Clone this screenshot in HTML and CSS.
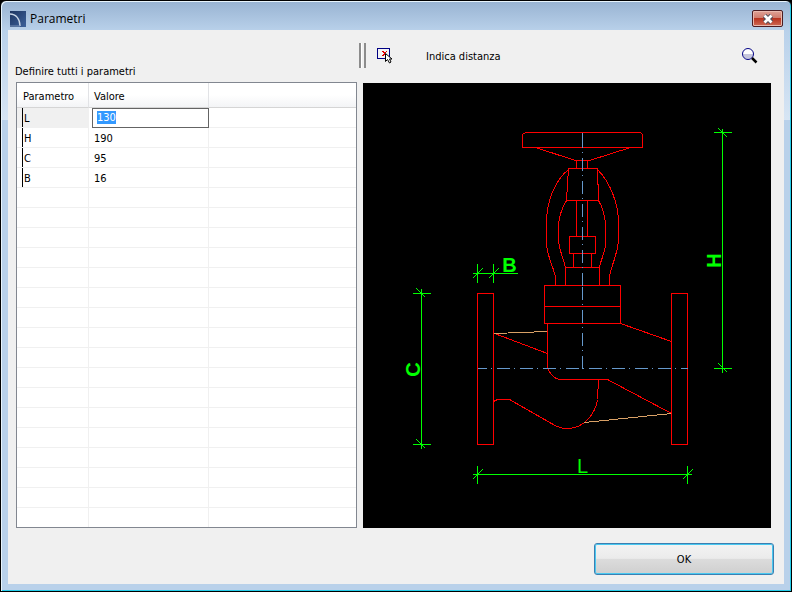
FILE: index.html
```
<!DOCTYPE html>
<html lang="it">
<head>
  <meta charset="UTF-8" />
  <title>Parametri</title>
  <link rel="stylesheet" href="styles.css">
</head>
<body>
  <div class="window">
    <!-- Title bar -->
    <header class="titlebar">
      <svg class="app-icon" width="16" height="16" viewBox="0 0 16 16">
        <defs>
          <linearGradient id="appFill" x1="0" y1="0" x2="1" y2="1">
            <stop offset="0" stop-color="#1d3560" />
            <stop offset="1" stop-color="#3d629b" />
          </linearGradient>
        </defs>
        <rect width="16" height="16" fill="url(#appFill)" />
        <path d="M0 3C6 3 10 8 10 15" fill="none" stroke="#c9d6e6" stroke-width="1.4" />
        <path d="M0 15H10" stroke="#7c95b8" />
      </svg>
      <h1>Parametri</h1>
      <button class="close" type="button" aria-label="Chiudi">
        <svg width="12" height="10" viewBox="0 0 12 10">
          <path d="M2.5 1.5L9.5 8.5M9.5 1.5L2.5 8.5" stroke="#4c4f5c" stroke-width="4.6" />
          <path d="M2.5 1.5L9.5 8.5M9.5 1.5L2.5 8.5" stroke="#fff" stroke-width="2.8" />
        </svg>
      </button>
    </header>

    <form class="content">
      <div class="panels">
        <!-- Parameter list -->
        <section class="left">
          <h2 id="listLabel">Definire tutti i parametri</h2>
          <div class="list">
            <table aria-labelledby="listLabel">
              <thead>
                <tr><th class="name">Parametro</th><th class="value">Valore</th><th></th></tr>
              </thead>
              <tbody>
                <tr class="selected">
                  <td><label for="valueL">L</label></td>
                  <td class="edit"><input id="valueL" type="text" value="130" /></td>
                  <td></td>
                </tr>
                <tr><td>H</td><td>190</td><td></td></tr>
                <tr><td>C</td><td>95</td><td></td></tr>
                <tr><td>B</td><td>16</td><td></td></tr>
              </tbody>
            </table>
            <div class="empty-rows"></div>
          </div>
        </section>

        <!-- Toolbar and preview -->
        <section class="right">
          <div class="toolbar">
            <span class="grip"></span>
            <button class="tool" type="button">
              <svg width="16" height="17" viewBox="0 0 16 17">
                <rect x="0.5" y="1.5" width="12" height="10" fill="#f4f4f4" stroke="#000084" />
                <path d="M5 4h2v1h2v-1h1v1h-1v1h-1v1h1v1h1v1h-2v-1h-1v1h-2v-1h1v-1h1v-1h-1v-1h-1z" fill="#e00000" />
                <path d="M8.500 6.500v8l2-2 2 3.500 1.500-1-1.500-3h2.500z" fill="#fff" stroke="#000" />
              </svg>
              <span>Indica distanza</span>
            </button>
            <button class="tool zoom" type="button" aria-label="Zoom">
              <svg width="16" height="16" viewBox="0 0 16 16">
                <circle cx="6" cy="6" r="5.500" fill="#fff" />
                <path d="M1 6h10a5 5 0 0 1-10 0z" fill="#c6c6dc" />
                <circle cx="6" cy="6" r="5.500" fill="none" stroke="#000084" />
                <path d="M10 10l4.500 4.500" stroke="#000" stroke-width="2.500" />
              </svg>
            </button>
          </div>

          <svg class="drawing" viewBox="362.5 82.5 408 445" role="img" aria-label="Valvola">
            <!-- valve body -->
            <g class="red">
              <path d="M525 132H640L642 134V147H522V134Z" />
              <path d="M535 147L575 160H589L630 147M576 160V168M587 160V168" />
              <path d="M568 168H597L598 200H566Z" />
              <path d="M576 200V236M587 200V236" />
              <path d="M569 236H595V253H569ZM573 253V267M591 253V267M565 267H599V285H565Z" />
              <path d="M568 169C554 180 546 202 546 222V245C548 260 555 271 555 278V285" />
              <path d="M597 169C610 182 618 204 618 222V241C616 258 609 269 609 277V285" />
              <path d="M566 200C561 208 558 218 558 228V240C559 250 563 259 565 267" />
              <path d="M598 200C603 208 605 218 605 228V243C605 251 600 260 599 267" />
              <path d="M544 285H620V323H544ZM544 306H620" />
              <path d="M477 293H493V444H477ZM671 293H687V444H671Z" />
              <path d="M494 333L547 353M620 323L671 341" />
              <path d="M547 323V367C549 373 554 379 560 379H607L671 413" />
              <path d="M598 379L597 399C595 412 585 428 566 428C562 428 556 426 551 423L509 399H497L493 401" />
            </g>
            <path class="tan" d="M494 333L547 331M584 422L671 413" />
            <!-- centre lines -->
            <path class="axis" d="M582 132V134M582 134V286M582 286V368" />
            <path class="axis" stroke-dashoffset="4" d="M477 368H687" />
            <!-- dimensions -->
            <g class="green">
              <path d="M421 288V448M412 293H430M412 444H430M416 288L425 297M416 439L425 448" />
              <path d="M472 273H517M477 263V282M493 263V282M472 278L482 268M488 278L498 268" />
              <path d="M472 474H691M477 465V483M687 465V483M472 479L482 469M682 479L692 469" />
              <path d="M722 128V372M713 132H731M713 368H731M718 128L727 137M718 363L727 372" />
            </g>
            <g class="dims">
              <text class="bold" x="509" y="271">B</text>
              <text x="582" y="472">L</text>
              <text class="bold" transform="translate(419 369) rotate(-90)">C</text>
              <text class="bold" transform="translate(720 260) rotate(-90)">H</text>
            </g>
          </svg>
        </section>
      </div>

      <footer>
        <button class="ok" type="button">OK</button>
      </footer>
    </form>
  </div>

  <script>
    const field = document.getElementById("valueL");
    field.focus();
    field.select();
  </script>
</body>
</html>
```
FILE: styles.css
```
*, *::before, *::after {
  box-sizing: border-box;
}
html, body {
  margin: 0;
  padding: 0;
}
body {
  background: #000;
  color: #000;
  font: 11px/14px Tahoma, "DejaVu Sans Condensed", "Open Sans", sans-serif;
}
button, input {
  font: inherit;
  color: inherit;
}
svg {
  display: block;
}

/* Window frame */
.window {
  display: flex;
  flex-direction: column;
  min-height: 100vh;
  padding: 0 7px 7px;
  border: 1px solid #000;
  border-radius: 6px 6px 0 0;
  background: linear-gradient(#98b3d2 0, #b9d1ea 30px, #d7e5f4 119px, #b9d1ea 119px);
  box-shadow: inset 1px 1px #e8f4fc, inset -1px -1px #25cdea;
}
.titlebar {
  display: flex;
  align-items: center;
  height: 29px;
  padding: 6px 1px 0 2px;
}
h1 {
  flex: 1;
  margin: 0 0 0 4px;
  font: 12px/16px "Segoe UI", "Open Sans", sans-serif;
}
.close {
  display: grid;
  place-items: center;
  width: 31px;
  height: 17px;
  padding: 0;
  border: 1px solid #4b1c22;
  border-radius: 2px;
  background: linear-gradient(#dfa296 0, #cf7a6c 48%, #b8331f 50%, #ce6a55 100%);
  box-shadow: inset 0 0 0 1px #e9b9ae;
}

.content {
  display: flex;
  flex: 1;
  flex-direction: column;
  background: #f0f0f0;
}
.panels {
  display: grid;
  flex: 1;
  grid-template-columns: 341fr 408fr;
  gap: 6px;
  padding: 0 13px 0 8px;
}
.left, .right {
  display: flex;
  flex-direction: column;
  min-width: 0;
}

/* Parameter list */
h2 {
  margin: 35px 0 3px -1px;
  font: inherit;
}
.list {
  display: flex;
  flex: 1;
  flex-direction: column;
  border: 1px solid #828790;
  background: #fff;
}
table {
  width: 100%;
  border-collapse: separate;
  border-spacing: 0;
  table-layout: fixed;
}
th {
  height: 25px;
  padding: 3px 0 0 5px;
  border-right: 1px solid #e2e3e6;
  border-bottom: 1px solid #d5d5d5;
  background: linear-gradient(#fff 50%, #f3f4f6 100%);
  font-weight: normal;
  text-align: left;
}
.name {
  width: 72px;
  padding-left: 6px;
}
.value {
  width: 120px;
}
td {
  height: 20px;
  padding: 2px 5px 0;
  border-right: 1px solid #f0f0f0;
  border-bottom: 1px solid #f0f0f0;
}
th:last-child, td:last-child {
  border-right: 0;
}
td:first-child {
  padding-left: 7px;
  background: linear-gradient(#000, #000) 5px 0 / 1px 100% no-repeat;
}
.selected td:first-child {
  background-color: #f0f0f0;
}
td.edit {
  padding: 0 0 0 3px;
  border: 0;
}
td.edit input {
  display: block;
  width: 100%;
  height: 20px;
  padding: 0 4px 2px;
  border: 1px solid #646464;
  outline: 0;
  background: #fff;
}
input::selection {
  background: #3399ff;
  color: #fff;
}
.empty-rows {
  flex: 1;
  background:
    linear-gradient(#f0f0f0, #f0f0f0) 71px 0 / 1px 100% no-repeat,
    linear-gradient(#f0f0f0, #f0f0f0) 191px 0 / 1px 100% no-repeat,
    repeating-linear-gradient(#fff 0 19px, #f0f0f0 19px 20px);
}

/* Toolbar */
.toolbar {
  display: flex;
  align-items: center;
  height: 51px;
  margin: 0 0 2px -4px;
  padding-right: 13px;
}
.grip {
  width: 7px;
  height: 25px;
  border: solid #8c8c8c;
  border-width: 0 2px;
  background: linear-gradient(90deg, #fff 1px, #f0f0f0 1px);
}
.tool {
  display: flex;
  align-items: center;
  gap: 33px;
  margin-left: 11px;
  padding: 0;
  border: 0;
  background: none;
}
.tool span {
  padding-top: 2px;
}
.zoom {
  margin-left: auto;
}

/* Preview drawing */
.drawing {
  flex: 1;
  width: 100%;
  min-height: 0;
  background: #000;
  fill: none;
  shape-rendering: crispEdges;
}
.red {
  stroke: #ff0000;
}
.tan {
  stroke: #d8a066;
}
.axis {
  stroke: #6699cc;
  stroke-dasharray: 13 4 1 5;
}
.green {
  stroke: #00ff00;
}
.dims {
  fill: #00ff00;
  font: 20px "Liberation Sans", Arial, sans-serif;
  text-anchor: middle;
}
.bold {
  font-weight: bold;
}

/* Footer */
footer {
  display: flex;
  justify-content: flex-end;
  padding: 15px 10px 9px;
}
.ok {
  width: 180px;
  height: 32px;
  padding: 2px 0 0;
  border: 1px solid #3c7fb1;
  border-radius: 3px;
  background: linear-gradient(#f3f3f3 0, #ebebeb 48%, #dcdcdc 50%, #cfcfcf 100%);
  box-shadow: inset 0 0 0 1px #48c8f0;
}
```
